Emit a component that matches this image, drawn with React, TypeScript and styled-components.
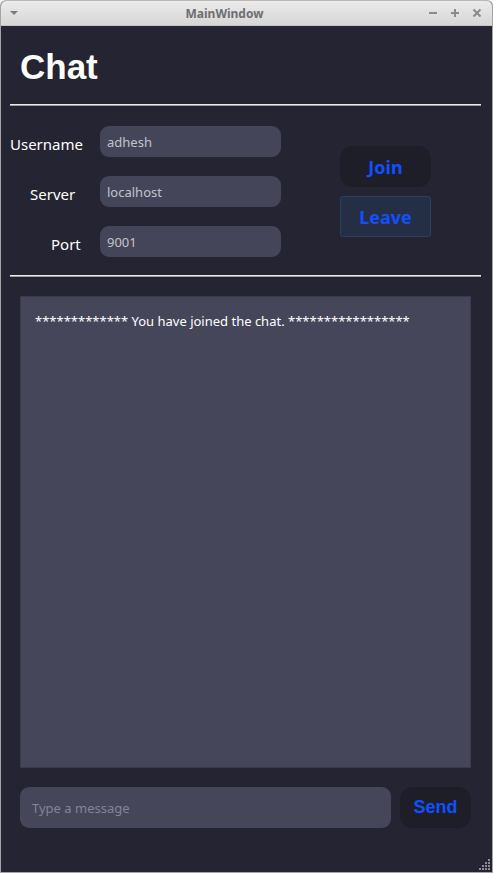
import React from "react";
import styled, { createGlobalStyle } from "styled-components";

const Global = createGlobalStyle`
  html, body { margin: 0; padding: 0; background: #ffffff; }
  body { width: 493px; height: 873px; overflow: hidden; }
  * { box-sizing: border-box; }
`;

const Window = styled.div`
  width: 493px;
  height: 873px;
  display: flex;
  flex-direction: column;
  border: 1px solid #a4a4a4;
  border-top-color: #b8b8b8;
  border-radius: 6px 6px 0 0;
  overflow: hidden;
  background: #252432;
`;

const TitleBar = styled.div`
  height: 25px;
  flex: none;
  display: flex;
  align-items: center;
  padding: 0 8px 0 8px;
  background: linear-gradient(#ebebeb, #d6d6d6);
  border-bottom: 1px solid #c4c4c4;
  font-family: "Noto Sans", "Open Sans", sans-serif;
`;

const TitleText = styled.div`
  flex: 1;
  text-align: center;
  font-size: 12px;
  font-weight: 700;
  color: #6e6e6e;
  padding-left: 4px;
`;

const TitleButtons = styled.div`
  display: flex;
  gap: 8px;
  align-items: center;
`;

const Content = styled.div`
  flex: 1;
  display: flex;
  flex-direction: column;
  padding: 0 11px 44px 9px;
  position: relative;
`;

const Heading = styled.h1`
  margin: 18px 0 0 10px;
  height: 60px;
  font-family: "Liberation Sans", Arial, sans-serif;
  font-weight: 700;
  font-size: 35px;
  line-height: 45px;
  color: #ffffff;
`;

const Divider = styled.div`
  height: 2px;
  background: #ececec;
  border-bottom: 1px solid #9c9ca4;
`;

const FormSection = styled.div`
  display: flex;
  align-items: center;
  padding: 20px 0 18px 0;
`;

const FormGrid = styled.div`
  display: grid;
  grid-template-columns: 90px 181px;
  row-gap: 19px;
  align-items: center;
`;

const Label = styled.label<{ $indent: number }>`
  padding-left: ${(p) => p.$indent}px;
  padding-top: 4px;
  font-family: "Noto Sans", "Open Sans", sans-serif;
  font-size: 15px;
  color: #ffffff;
`;

const Field = styled.div`
  height: 31px;
  border-radius: 9px;
  background: #444558;
  display: flex;
  align-items: center;
  padding-left: 7px;
  font-family: "Noto Sans", "Open Sans", sans-serif;
  font-size: 13px;
  color: #c3c3cf;
`;

const ButtonColumn = styled.div`
  display: flex;
  flex-direction: column;
  gap: 9px;
  margin-left: 59px;
`;

const ActionButton = styled.button<{ $focused?: boolean }>`
  width: 91px;
  height: 41px;
  border-radius: ${(p) => (p.$focused ? "3px" : "13px")};
  border: 1px solid ${(p) => (p.$focused ? "#2a4260" : "transparent")};
  background: ${(p) => (p.$focused ? "#242f45" : "#1e1e29")};
  color: #1050ff;
  font-family: "Noto Sans", "Open Sans", sans-serif;
  font-weight: 700;
  font-size: 18px;
  padding: 0;
  cursor: pointer;
`;

const ChatLog = styled.div`
  flex: 1;
  margin: 19px 10px 19px 10px;
  background: #45465a;
  border: 1px solid #3a3b4d;
  padding: 15px 14px;
  font-family: "Noto Sans", "Open Sans", sans-serif;
  font-size: 13px;
  color: #ffffff;
`;

const BottomBar = styled.div`
  display: flex;
  gap: 9px;
  margin: 0 10px;
`;

const MessageInput = styled.div`
  flex: 1;
  height: 41px;
  border-radius: 9px;
  background: #454659;
  display: flex;
  align-items: center;
  padding-left: 12px;
  font-family: "Noto Sans", "Open Sans", sans-serif;
  font-size: 13px;
  color: #84849a;
`;

const SendButton = styled.button`
  width: 71px;
  height: 41px;
  border-radius: 13px;
  border: none;
  background: #1e1e29;
  color: #1050ff;
  font-family: "Liberation Sans", Arial, sans-serif;
  font-weight: 700;
  font-size: 18px;
  padding: 0;
`;

const Grip = styled.svg`
  position: absolute;
  right: 1px;
  bottom: 1px;
`;

const rows: { label: string; value: string; indent: number }[] = [
  { label: "Username", value: "adhesh", indent: 0 },
  { label: "Server", value: "localhost", indent: 20 },
  { label: "Port", value: "9001", indent: 41 },
];

export default function App() {
  return (
    <>
      <Global />
      <Window>
        <TitleBar>
          <svg width="10" height="6" viewBox="0 0 10 6">
            <path d="M1 1 L9 1 L5 5 Z" fill="#7c7c7c" />
          </svg>
          <TitleText>MainWindow</TitleText>
          <TitleButtons>
            <svg width="14" height="14" viewBox="0 0 14 14">
              <path d="M3 7 H11" stroke="#8a8a8a" strokeWidth="2" />
            </svg>
            <svg width="14" height="14" viewBox="0 0 14 14">
              <path d="M3 7 H11 M7 3 V11" stroke="#8a8a8a" strokeWidth="2" />
            </svg>
            <svg width="14" height="14" viewBox="0 0 14 14">
              <path d="M3.5 3.5 L10.5 10.5 M10.5 3.5 L3.5 10.5" stroke="#8a8a8a" strokeWidth="2" />
            </svg>
          </TitleButtons>
        </TitleBar>
        <Content>
          <Heading>Chat</Heading>
          <Divider />
          <FormSection>
            <FormGrid>
              {rows.map((r) => (
                <React.Fragment key={r.label}>
                  <Label $indent={r.indent}>{r.label}</Label>
                  <Field>{r.value}</Field>
                </React.Fragment>
              ))}
            </FormGrid>
            <ButtonColumn>
              <ActionButton>Join</ActionButton>
              <ActionButton $focused>Leave</ActionButton>
            </ButtonColumn>
          </FormSection>
          <Divider />
          <ChatLog>************* You have joined the chat. *****************</ChatLog>
          <BottomBar>
            <MessageInput>Type a message</MessageInput>
            <SendButton>Send</SendButton>
          </BottomBar>
          <Grip width="12" height="12" viewBox="0 0 12 12">
            {[
              [9, 0], [9, 3], [6, 3], [9, 6], [6, 6], [3, 6], [9, 9], [6, 9], [3, 9], [0, 9],
            ].map(([x, y], i) => (
              <rect key={i} x={x} y={y} width="2" height="2" fill="#8a8a98" />
            ))}
          </Grip>
        </Content>
      </Window>
    </>
  );
}
